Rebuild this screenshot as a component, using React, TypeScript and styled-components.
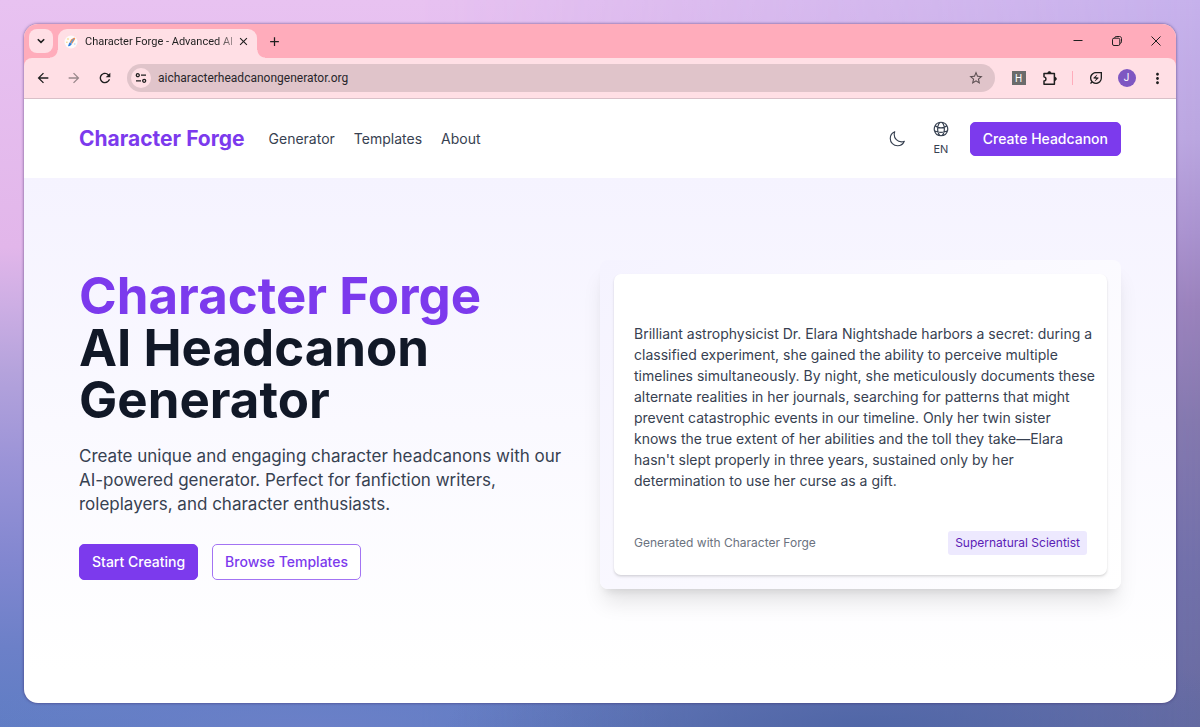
import React from "react";
import styled, { createGlobalStyle, css } from "styled-components";
import {
  MdArrowBack,
  MdArrowForward,
  MdRefresh,
  MdStarOutline,
  MdMoreVert,
  MdOutlineEnergySavingsLeaf,
  MdAdd,
  MdClose,
} from "react-icons/md";

const violet = "#7c3aed";
const blush = "#ffdfe5";
const rose = "#ffacbb";
const ink = "#1f1f1f";

const GlobalStyle = createGlobalStyle`
  *, *::before, *::after { box-sizing: border-box; }
  body {
    margin: 0;
    font-family: Inter, "Liberation Sans", sans-serif;
    color: #374151;
  }
  button, input { font: inherit; color: inherit; }
  a { color: inherit; text-decoration: none; }
  h1, p { margin: 0; }
`;

const Desktop = styled.div`
  position: relative;
  isolation: isolate;
  display: flex;
  flex-direction: column;
  min-height: 100vh;
  padding: 24px;
  background: linear-gradient(
    180deg,
    #e8c2f1 0%,
    #e2b6ea 34%,
    #cdaee4 42%,
    #b5a3dc 51%,
    #9a93d7 64%,
    #8287d0 77%,
    #6c80c8 89%,
    #5f7dc4 100%
  );

  &::before {
    content: "";
    position: absolute;
    inset: 0;
    z-index: -1;
    background: linear-gradient(
      180deg,
      #c6b1ec 0%,
      #baa6e0 19%,
      #a992cf 32%,
      #9a82bc 42%,
      #8478ae 58%,
      #7270aa 77%,
      #686ba0 100%
    );
    mask-image: linear-gradient(90deg, transparent 35%, #000 100%);
  }

  &::after {
    content: "";
    position: absolute;
    inset: 0;
    z-index: -1;
    background: radial-gradient(
        420px 90px at 72% 100%,
        rgba(78, 101, 166, 0.9),
        rgba(78, 101, 166, 0)
      ),
      radial-gradient(
        360px 60px at 26% 100%,
        rgba(108, 128, 200, 0.9),
        rgba(108, 128, 200, 0)
      );
  }
`;

const BrowserWindow = styled.div`
  flex: 1;
  display: flex;
  flex-direction: column;
  overflow: hidden;
  border-radius: 14px;
  background: #fff;
  box-shadow: 0 0 3px rgba(50, 30, 90, 0.7);
`;

const TabStrip = styled.div`
  display: flex;
  align-items: center;
  height: 34px;
  padding: 0 1px 0 5px;
  background: ${rose};
`;

const ChromeButton = styled.button<{ $width?: number; $dim?: boolean }>`
  display: inline-flex;
  flex: none;
  align-items: center;
  justify-content: center;
  width: ${(p) => p.$width ?? 31}px;
  height: 28px;
  padding: 0;
  border: 0;
  background: none;
  color: ${ink};
  opacity: ${(p) => (p.$dim ? 0.45 : 1)};
`;

const TabSearch = styled(ChromeButton)`
  height: 24px;
  border-radius: 8px;
  background: ${blush};
`;

const flare = css`
  content: "";
  position: absolute;
  bottom: 0;
  width: 8px;
  height: 8px;
`;

const Tab = styled.div`
  position: relative;
  align-self: flex-end;
  display: flex;
  align-items: center;
  width: 199px;
  height: 29px;
  margin-left: 5px;
  padding: 0 6px 4px 6px;
  border-radius: 9px 9px 0 0;
  background: ${blush};

  &::before {
    ${flare}
    left: -8px;
    background: radial-gradient(circle at 0 0, transparent 7px, ${blush} 8px);
  }
  &::after {
    ${flare}
    right: -8px;
    background: radial-gradient(circle at 100% 0, transparent 7px, ${blush} 8px);
  }
`;

const TabTitle = styled.span`
  flex: 1;
  min-width: 0;
  margin-left: 7px;
  overflow: hidden;
  white-space: nowrap;
  font-family: Roboto, sans-serif;
  font-size: 11px;
  line-height: 16px;
  color: ${ink};
  mask-image: linear-gradient(90deg, #000 88%, rgba(0, 0, 0, 0.3) 100%);
`;

const WindowControls = styled.div`
  display: flex;
  margin-left: auto;
`;

const ToolbarBack = styled.div`
  background: ${rose};
`;

const Toolbar = styled.div`
  display: flex;
  align-items: center;
  height: 41px;
  padding: 0 3px;
  border-bottom: 1px solid #d9c0c8;
  border-radius: 8px 8px 0 0;
  background: ${blush};
`;

const AddressBar = styled.div`
  flex: 1;
  display: flex;
  align-items: center;
  height: 28px;
  margin: 0 8px 0 7px;
  padding: 0 4px;
  border-radius: 14px;
  background: #e0c4ca;
`;

const SiteInfo = styled(ChromeButton)`
  height: 20px;
  border-radius: 50%;
  background: ${blush};
`;

const AddressInput = styled.input`
  flex: 1;
  min-width: 0;
  padding: 0 7px;
  border: 0;
  outline: 0;
  background: none;
  font-family: Roboto, sans-serif;
  font-size: 12px;
  line-height: 20px;
  color: #28262a;
`;

const ExtensionBadge = styled.span`
  display: grid;
  place-items: center;
  width: 14px;
  height: 14px;
  background: #6b6b6b;
  color: #fff;
  font-family: Roboto, sans-serif;
  font-size: 10px;
  line-height: 16px;
`;

const Divider = styled.span`
  width: 1px;
  height: 14px;
  margin: 0 7px;
  background: ${rose};
`;

const Avatar = styled.span`
  width: 18px;
  border-radius: 50%;
  background: #7e57c2;
  color: #fff;
  font-family: Roboto, sans-serif;
  font-size: 10px;
  line-height: 18px;
  text-align: center;
`;

const SiteHeader = styled.header`
  display: flex;
  align-items: center;
  min-height: 79px;
  padding: 0 55px;
  background: #fff;
`;

const Brand = styled.a`
  color: ${violet};
  font-size: 21px;
  font-weight: 700;
  line-height: 28px;
  white-space: nowrap;
`;

const Nav = styled.nav`
  display: flex;
  gap: 19px;
  margin-left: 24px;
  font-size: 14px;
  line-height: 20px;
`;

const HeaderActions = styled.div`
  display: flex;
  align-items: center;
  gap: 14px;
  margin-left: auto;
`;

const IconButton = styled.button`
  display: flex;
  flex-direction: column;
  align-items: center;
  gap: 3px;
  width: 30px;
  padding: 0;
  border: 0;
  background: none;
  font-size: 11px;
  line-height: 16px;
  color: #374151;
`;

const ActionLink = styled.a<{ $outline?: boolean; $compact?: boolean }>`
  padding: ${(p) => (p.$compact ? "6px 12px" : "7px 12px")};
  border: 1px solid ${(p) => (p.$outline ? "#a374f3" : violet)};
  border-radius: 5px;
  background: ${(p) => (p.$outline ? "#fff" : violet)};
  color: ${(p) => (p.$outline ? violet : "#fff")};
  font-size: 14px;
  font-weight: 500;
  line-height: 20px;
  white-space: nowrap;
`;

const Hero = styled.main`
  display: grid;
  grid-template-columns: 1fr 1fr;
  align-items: center;
  padding: 82px 55px;
  background: linear-gradient(180deg, #f5f3ff, #fff);
`;

const Pitch = styled.section`
  padding-right: 24px;
`;

const Title = styled.h1`
  color: #111827;
  font-size: 51px;
  font-weight: 700;
  line-height: 52px;
`;

const TitleAccent = styled.span`
  display: block;
  color: ${violet};
`;

const Lead = styled.p`
  margin: 18px 0 28px;
  font-size: 17px;
  line-height: 24px;
`;

const Actions = styled.div`
  display: flex;
  gap: 14px;
`;

const Showcase = styled.section`
  padding: 14px;
  border-radius: 8px;
  background: linear-gradient(135deg, #f5f3ff, #fff);
  box-shadow: 0 17px 21px -4px rgba(0, 0, 0, 0.1),
    0 7px 9px -5px rgba(0, 0, 0, 0.1);
`;

const SampleCard = styled.article`
  padding: 49px 20px 20px;
  border-radius: 7px;
  background: #fff;
  box-shadow: 0 2px 3px rgba(0, 0, 0, 0.1), 0 1px 2px rgba(0, 0, 0, 0.06);
`;

const SampleText = styled.p`
  margin-right: -12px;
  font-size: 14px;
  line-height: 21px;
`;

const SampleFooter = styled.footer`
  display: flex;
  align-items: center;
  justify-content: space-between;
  margin-top: 40px;
  font-size: 12px;
  line-height: 16px;
  color: #6b7280;
`;

const Tag = styled.span`
  padding: 4px 7px;
  border-radius: 3px;
  background: #ede9fe;
  color: #5b21b6;
`;

const ChevronIcon = () => (
  <svg width="10" height="10" viewBox="0 0 10 10" fill="none" stroke="currentColor" strokeWidth="1.6">
    <path d="M1.8 3.2 5 6.4l3.2-3.2" />
  </svg>
);

const Favicon = () => (
  <svg width="14" height="14" viewBox="0 0 14 14">
    <circle cx="7" cy="7" r="6.5" fill="#fdfbfb" />
    <path d="M3.9 11.2 5.4 7.6l2.8 1.2-2.2 2.3z" fill="#2f7fe0" />
    <path d="M5.6 7.4 7 4.6l3.3-2.2 1 1.4-2.9 4.8z" fill="#f08a4b" />
    <path d="m7 7.8 2.6-3.6" stroke="#4fa2e8" strokeWidth="1.2" />
    <circle cx="4" cy="4" r=".8" fill="#f5cf6a" />
    <circle cx="2.9" cy="7.3" r=".7" fill="#f5cf6a" />
    <circle cx="10.8" cy="9" r=".7" fill="#9fd3f5" />
  </svg>
);

const MinimizeIcon = () => (
  <svg width="10" height="10" viewBox="0 0 10 10" stroke="currentColor">
    <path d="M.5 4.5h9" />
  </svg>
);

const RestoreIcon = () => (
  <svg width="10" height="10" viewBox="0 0 10 10" fill="none" stroke="currentColor">
    <rect x=".5" y="2.2" width="7.3" height="7.3" rx="1.5" />
    <path d="M2.6 1.9C2.8 1 3.4.5 4.2.5h3.3c1.2 0 2 .8 2 2v3.3c0 .8-.5 1.4-1.4 1.6" />
  </svg>
);

const CloseWindowIcon = () => (
  <svg width="10" height="10" viewBox="0 0 10 10" stroke="currentColor">
    <path d="m.5.5 9 9m0-9-9 9" />
  </svg>
);

const TuneIcon = () => (
  <svg width="12" height="12" viewBox="0 0 12 12" fill="none" stroke={ink} strokeWidth="1.3">
    <circle cx="2.8" cy="3.2" r="1.5" />
    <path d="M6 3.2h5M1 8.8h5" />
    <circle cx="9.2" cy="8.8" r="1.5" />
  </svg>
);

const PuzzleIcon = () => (
  <svg width="16" height="16" viewBox="0 0 16 16" fill="none" stroke="currentColor" strokeWidth="1.5" strokeLinejoin="round">
    <path d="M2 3.4h10.4v10.8H2v-3.1c1.3-.2 2-.9 2-2.1s-.7-2-2-2.2z" />
    <path d="M5.9 3a1.5 1.5 0 0 1 3 0zM12.8 7.2a1.6 1.6 0 0 1 0 3.2z" fill="currentColor" strokeWidth=".8" />
  </svg>
);

const MoonIcon = () => (
  <svg width="18" height="18" viewBox="0 0 24 24" fill="none" stroke="currentColor" strokeWidth="1.5" strokeLinecap="round" strokeLinejoin="round">
    <path d="M21.752 15.002A9.72 9.72 0 0 1 18 15.75c-5.385 0-9.75-4.365-9.75-9.75 0-1.33.266-2.597.748-3.752A9.753 9.753 0 0 0 3 11.25C3 16.635 7.365 21 12.75 21a9.753 9.753 0 0 0 9.002-5.998Z" />
  </svg>
);

const GlobeIcon = () => (
  <svg width="18" height="18" viewBox="0 0 24 24" fill="none" stroke="currentColor" strokeWidth="1.6" strokeLinecap="round" strokeLinejoin="round">
    <path d="M12 21a9.004 9.004 0 0 0 8.716-6.747M12 21a9.004 9.004 0 0 1-8.716-6.747M12 21c2.485 0 4.5-4.03 4.5-9S14.485 3 12 3m0 18c-2.485 0-4.5-4.03-4.5-9S9.515 3 12 3m0 0a8.997 8.997 0 0 1 7.843 4.582M12 3a8.997 8.997 0 0 0-7.843 4.582m15.686 0A11.953 11.953 0 0 1 12 10.5c-2.998 0-5.74-1.1-7.843-2.918m15.686 0A8.959 8.959 0 0 1 21 12c0 .778-.099 1.533-.284 2.253m0 0A17.919 17.919 0 0 1 12 16.5c-3.162 0-6.133-.815-8.716-2.247m0 0A9.015 9.015 0 0 1 3 12c0-1.605.42-3.113 1.157-4.418" />
  </svg>
);

const sampleLines = [
  "Brilliant astrophysicist Dr. Elara Nightshade harbors a secret: during a",
  "classified experiment, she gained the ability to perceive multiple",
  "timelines simultaneously. By night, she meticulously documents these",
  "alternate realities in her journals, searching for patterns that might",
  "prevent catastrophic events in our timeline. Only her twin sister",
  "knows the true extent of her abilities and the toll they take—Elara",
  "hasn't slept properly in three years, sustained only by her",
  "determination to use her curse as a gift.",
];

export default function App() {
  return (
    <Desktop>
      <GlobalStyle />
      <BrowserWindow>
        <TabStrip>
          <TabSearch $width={24} aria-label="Search tabs">
            <ChevronIcon />
          </TabSearch>
          <Tab>
            <Favicon />
            <TabTitle>Character Forge - Advanced AI</TabTitle>
            <ChromeButton $width={16} aria-label="Close tab">
              <MdClose size={13} />
            </ChromeButton>
          </Tab>
          <ChromeButton $width={34} aria-label="New tab">
            <MdAdd size={15} />
          </ChromeButton>
          <WindowControls>
            <ChromeButton $width={39} aria-label="Minimize">
              <MinimizeIcon />
            </ChromeButton>
            <ChromeButton $width={39} aria-label="Restore">
              <RestoreIcon />
            </ChromeButton>
            <ChromeButton $width={39} aria-label="Close window">
              <CloseWindowIcon />
            </ChromeButton>
          </WindowControls>
        </TabStrip>
        <ToolbarBack>
          <Toolbar>
            <ChromeButton aria-label="Back">
              <MdArrowBack size={16} />
            </ChromeButton>
            <ChromeButton $dim aria-label="Forward">
              <MdArrowForward size={16} />
            </ChromeButton>
            <ChromeButton aria-label="Reload">
              <MdRefresh size={16} />
            </ChromeButton>
            <AddressBar>
              <SiteInfo $width={20} aria-label="Site information">
                <TuneIcon />
              </SiteInfo>
              <AddressInput aria-label="Address" defaultValue="aicharacterheadcanongenerator.org" />
              <ChromeButton aria-label="Bookmark this page">
                <MdStarOutline size={16} color="#5c4f52" />
              </ChromeButton>
            </AddressBar>
            <ChromeButton aria-label="Extension">
              <ExtensionBadge>H</ExtensionBadge>
            </ChromeButton>
            <ChromeButton aria-label="Extensions">
              <PuzzleIcon />
            </ChromeButton>
            <Divider />
            <ChromeButton aria-label="Energy saver">
              <MdOutlineEnergySavingsLeaf size={16} />
            </ChromeButton>
            <ChromeButton aria-label="Profile">
              <Avatar>J</Avatar>
            </ChromeButton>
            <ChromeButton aria-label="Menu">
              <MdMoreVert size={17} />
            </ChromeButton>
          </Toolbar>
        </ToolbarBack>
        <SiteHeader>
          <Brand href="#home">Character Forge</Brand>
          <Nav>
            <a href="#generator">Generator</a>
            <a href="#templates">Templates</a>
            <a href="#about">About</a>
          </Nav>
          <HeaderActions>
            <IconButton aria-label="Toggle dark mode">
              <MoonIcon />
            </IconButton>
            <IconButton aria-label="Language">
              <GlobeIcon />
              <span>EN</span>
            </IconButton>
            <ActionLink href="#create" $compact>
              Create Headcanon
            </ActionLink>
          </HeaderActions>
        </SiteHeader>
        <Hero>
          <Pitch>
            <Title>
              <TitleAccent>Character Forge</TitleAccent>
              AI Headcanon Generator
            </Title>
            <Lead>
              Create unique and engaging character headcanons with our AI-powered
              generator. Perfect for fanfiction writers, roleplayers, and character
              enthusiasts.
            </Lead>
            <Actions>
              <ActionLink href="#create">Start Creating</ActionLink>
              <ActionLink href="#templates" $outline>
                Browse Templates
              </ActionLink>
            </Actions>
          </Pitch>
          <Showcase>
            <SampleCard>
              <SampleText>
                {sampleLines.map((line) => (
                  <React.Fragment key={line}>
                    {line}
                    <br />
                  </React.Fragment>
                ))}
              </SampleText>
              <SampleFooter>
                <span>Generated with Character Forge</span>
                <Tag>Supernatural Scientist</Tag>
              </SampleFooter>
            </SampleCard>
          </Showcase>
        </Hero>
      </BrowserWindow>
    </Desktop>
  );
}
